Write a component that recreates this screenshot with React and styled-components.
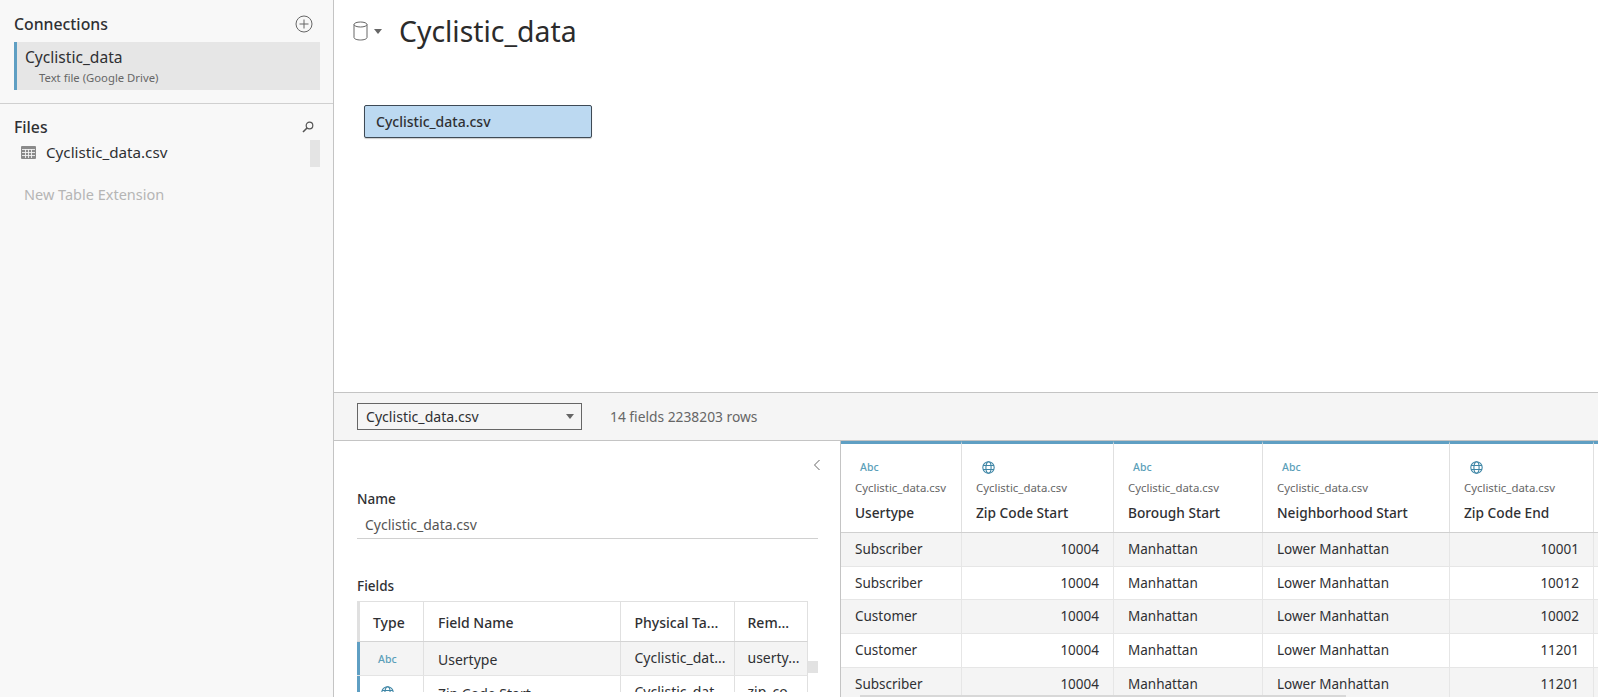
import styled, { createGlobalStyle } from "styled-components";

const FONT = `"Noto Sans", "Open Sans", "Liberation Sans", sans-serif`;
const BLUE = "#5f9fc3";

const GlobalStyle = createGlobalStyle`
  html, body { margin: 0; padding: 0; background: #fff; }
  * { box-sizing: border-box; }
  body { font-family: ${FONT}; color: #2f3033; }
`;

const Page = styled.div`
  display: flex;
  width: 1598px;
  height: 697px;
  overflow: hidden;
`;

/* ---------- left sidebar ---------- */
const Sidebar = styled.aside`
  width: 334px;
  flex: none;
  background: #f8f8f8;
  border-right: 1px solid #c4c4c4;
`;

const SideSection = styled.section`
  padding: ${(p) => p.$pad};
  border-bottom: ${(p) => (p.$divider ? "1px solid #d0d0d0" : "none")};
`;

const SideHead = styled.div`
  display: flex;
  justify-content: space-between;
  align-items: center;
  height: 24px;
  font-size: 15.8px;
  font-weight: 500;
  padding-right: ${(p) => p.$pr};
`;

const ConnectionRow = styled.div`
  height: 48px;
  margin-top: 6px;
  background: #e6e6e6;
  border-left: 3px solid ${BLUE};
  padding: 4px 0 0 8px;
`;

const ConnectionName = styled.div`
  font-size: 15.6px;
  line-height: 22px;
`;

const ConnectionSub = styled.div`
  font-size: 11.3px;
  line-height: 16px;
  margin: 2px 0 0 14px;
  color: #666;
`;

const FileList = styled.div`
  position: relative;
  margin-top: 1px;
`;

const FileRow = styled.div`
  display: flex;
  align-items: center;
  gap: 10px;
  height: 24px;
  padding-left: 7px;
  font-size: 15.2px;
`;

const FileThumb = styled.div`
  position: absolute;
  right: 0;
  top: 0;
  width: 10px;
  height: 27px;
  background: #e4e4e4;
`;

const NewTable = styled.div`
  margin: 20px 0 0 10px;
  font-size: 14.5px;
  color: #b5b5b5;
`;

/* ---------- main ---------- */
const Main = styled.main`
  flex: 1;
  min-width: 0;
  display: flex;
  flex-direction: column;
`;

const Canvas = styled.div`
  height: 392px;
  flex: none;
  padding: 10px 0 0 19px;
`;

const TitleRow = styled.div`
  display: flex;
  align-items: center;
  height: 42px;
`;

const Title = styled.h1`
  margin: 0 0 0 17px;
  font-size: 28.4px;
  font-weight: 400;
  color: #2b2b2b;
`;

const Caret = styled.span`
  display: inline-block;
  width: 0;
  height: 0;
  margin-left: 6px;
  border-left: 4.5px solid transparent;
  border-right: 4.5px solid transparent;
  border-top: 5px solid #666;
`;

const TableChip = styled.div`
  display: flex;
  align-items: center;
  width: 228px;
  height: 33px;
  margin: 53px 0 0 11px;
  padding-left: 11px;
  background: #bcd9f1;
  border: 1px solid #3e4a55;
  border-radius: 2px;
  box-shadow: 0 1px 1px rgba(0, 0, 0, 0.2);
  font-size: 14px;
  font-weight: 500;
`;

const Toolbar = styled.div`
  display: flex;
  align-items: center;
  height: 49px;
  flex: none;
  padding: 0 0 0 23px;
  background: #f5f5f5;
  border-top: 1px solid #c4c4c4;
  border-bottom: 1px solid #c4c4c4;
`;

const SelectBox = styled.div`
  display: flex;
  align-items: center;
  justify-content: space-between;
  width: 225px;
  height: 27px;
  padding: 0 7px 0 8px;
  border: 1px solid #666;
  font-size: 14.1px;
`;

const ToolbarInfo = styled.span`
  margin-left: 28px;
  font-size: 13.8px;
  color: #666;
`;

const Lower = styled.div`
  flex: 1;
  min-height: 0;
  display: flex;
`;

const MetaPanel = styled.div`
  width: 507px;
  flex: none;
  position: relative;
  padding: 0 22px 0 23px;
  border-right: 1px solid #c4c4c4;
  overflow: hidden;
`;

const Collapse = styled.div`
  display: flex;
  justify-content: flex-end;
  height: 48px;
  padding: 18px 0 0 0;
  margin-right: -3px;
`;

const MetaLabel = styled.div`
  font-size: 13.5px;
  font-weight: 500;
  line-height: 20px;
`;

const NameValue = styled.div`
  height: 30px;
  padding: 6px 0 0 8px;
  margin-bottom: 37px;
  border-bottom: 1px solid #d0d0d0;
  font-size: 14px;
  color: #555;
`;

const FieldsClip = styled.div`
  position: relative;
  height: 91px;
  margin-top: 5px;
  overflow: hidden;
`;

const FieldsRow = styled.div`
  display: grid;
  grid-template-columns: 67px 196.5px 114px 73.5px;
  width: 451px;
  height: ${(p) => p.$h};
  font-weight: ${(p) => (p.$head ? 500 : 400)};
  background: ${(p) => (p.$shade ? "#f4f4f4" : "#fff")};
  border-top: ${(p) => (p.$head ? "1px solid #e0e0e0" : "none")};
  border-bottom: 1px solid ${(p) => (p.$head ? "#d4d4d4" : "#e4e4e4")};
  border-right: 1px solid #e0e0e0;
  font-size: 14px;
`;

const FieldCell = styled.div`
  display: flex;
  align-items: center;
  padding: ${(p) => p.$pad || "2px 0 0 14px"};
  border-right: ${(p) => (p.$last ? "none" : "1px solid #e0e0e0")};
  border-left: ${(p) => (p.$bar ? `3px solid ${p.$bar}` : "none")};
  white-space: nowrap;
  overflow: hidden;
`;

const FieldsThumb = styled.div`
  position: absolute;
  left: 451px;
  top: 60px;
  width: 10px;
  height: 12px;
  background: #e2e2e2;
`;

const Abc = styled.span`
  font-size: 10.5px;
  font-weight: 500;
  color: #5b9fb9;
`;

/* ---------- data grid ---------- */
const DataGrid = styled.div`
  flex: 1;
  min-width: 0;
  position: relative;
  overflow: hidden;
`;

const DataRow = styled.div`
  display: grid;
  grid-template-columns: 121px 152px 149px 187px 144px 1fr;
  height: ${(p) => p.$h};
  background: ${(p) => (p.$shade ? "#f4f4f4" : "#fff")};
  border-bottom: 1px solid ${(p) => (p.$head ? "#d0d0d0" : "#e6e6e6")};
`;

const HeadCell = styled.div`
  padding: 13px 0 0 14px;
  border-top: 3px solid ${BLUE};
  border-right: 1px solid #e0e0e0;
`;

const HeadIcon = styled.div`
  display: flex;
  align-items: center;
  height: 20px;
  padding-left: ${(p) => p.$pl};
`;

const HeadSource = styled.div`
  font-size: 11.4px;
  line-height: 16px;
  margin-top: 3px;
  color: #666;
`;

const HeadName = styled.div`
  font-size: 13.7px;
  font-weight: 500;
  line-height: 20px;
  margin-top: 7px;
`;

const DataCell = styled.div`
  display: flex;
  align-items: center;
  justify-content: ${(p) => (p.$num ? "flex-end" : "flex-start")};
  padding: ${(p) => (p.$num ? "0 14px 1px 0" : "0 0 1px 14px")};
  border-right: 1px solid #e6e6e6;
  font-size: 13.5px;
  white-space: nowrap;
`;

const GridScroll = styled.div`
  position: absolute;
  left: 19px;
  bottom: 0;
  width: 486px;
  height: 2px;
  background: #d8d8d8;
`;

/* ---------- drawings ---------- */
const PlusCircle = () => (
  <svg width="18" height="18" viewBox="0 0 18 18" fill="none" stroke="#666" strokeWidth="1">
    <circle cx="9" cy="9" r="8" />
    <path d="M9 4.5v9M4.5 9h9" />
  </svg>
);

const Search = () => (
  <svg width="12" height="12" viewBox="0 0 12 12" fill="none" stroke="#555" strokeWidth="1.2">
    <circle cx="7.5" cy="4.5" r="3.3" />
    <path d="M5 7L1 11" strokeWidth="1.6" />
  </svg>
);

const TableIcon = () => (
  <svg width="15" height="13" viewBox="0 0 15 13">
    <rect x="0" y="0" width="15" height="13" rx="1" fill="#8a8a8a" />
    <path d="M1 3.5h13M1 6.5h13M1 9.5h13M4.5 3v9M7.5 3v9M10.5 3v9" stroke="#f2f2f2" strokeWidth="0.9" fill="none" />
  </svg>
);

const Cylinder = () => (
  <svg width="15" height="20" viewBox="0 0 15 20" fill="none" stroke="#666" strokeWidth="1">
    <ellipse cx="7.5" cy="3.5" rx="6.5" ry="2.5" />
    <path d="M1 3.5v13c0 1.4 2.9 2.5 6.5 2.5s6.5-1.1 6.5-2.5v-13" />
  </svg>
);

const Globe = ({ size = 13 }) => (
  <svg width={size} height={size} viewBox="0 0 13 13" fill="none" stroke="#3f86a6" strokeWidth="1.1">
    <circle cx="6.5" cy="6.5" r="5.7" />
    <ellipse cx="6.5" cy="6.5" rx="2.6" ry="5.7" />
    <path d="M1 4.5h11M1 8.5h11" />
  </svg>
);

const Chevron = () => (
  <svg width="8" height="12" viewBox="0 0 8 12" fill="none" stroke="#666" strokeWidth="1">
    <path d="M6.5 1L1.5 6l5 5" />
  </svg>
);

const columns = [
  { name: "Usertype", type: "abc" },
  { name: "Zip Code Start", type: "geo" },
  { name: "Borough Start", type: "abc" },
  { name: "Neighborhood Start", type: "abc" },
  { name: "Zip Code End", type: "geo" },
];

const rows = [
  ["Subscriber", "10004", "Manhattan", "Lower Manhattan", "10001"],
  ["Subscriber", "10004", "Manhattan", "Lower Manhattan", "10012"],
  ["Customer", "10004", "Manhattan", "Lower Manhattan", "10002"],
  ["Customer", "10004", "Manhattan", "Lower Manhattan", "11201"],
  ["Subscriber", "10004", "Manhattan", "Lower Manhattan", "11201"],
];

export default function App() {
  return (
    <Page>
      <GlobalStyle />
      <Sidebar>
        <SideSection $pad="12px 13px 13px 14px" $divider>
          <SideHead $pr="7px">
            Connections
            <PlusCircle />
          </SideHead>
          <ConnectionRow>
            <ConnectionName>Cyclistic_data</ConnectionName>
            <ConnectionSub>Text file (Google Drive)</ConnectionSub>
          </ConnectionRow>
        </SideSection>
        <SideSection $pad="11px 13px 11px 14px">
          <SideHead $pr="6px">
            Files
            <Search />
          </SideHead>
          <FileList>
            <FileRow>
              <TableIcon />
              Cyclistic_data.csv
            </FileRow>
            <FileThumb />
          </FileList>
          <NewTable>New Table Extension</NewTable>
        </SideSection>
      </Sidebar>

      <Main>
        <Canvas>
          <TitleRow>
            <Cylinder />
            <Caret />
            <Title>Cyclistic_data</Title>
          </TitleRow>
          <TableChip>Cyclistic_data.csv</TableChip>
        </Canvas>

        <Toolbar>
          <SelectBox>
            Cyclistic_data.csv
            <Caret />
          </SelectBox>
          <ToolbarInfo>14 fields 2238203 rows</ToolbarInfo>
        </Toolbar>

        <Lower>
          <MetaPanel>
            <Collapse>
              <Chevron />
            </Collapse>
            <MetaLabel>Name</MetaLabel>
            <NameValue>Cyclistic_data.csv</NameValue>
            <MetaLabel>Fields</MetaLabel>
            <FieldsClip>
              <FieldsRow $head $h="41px">
                <FieldCell $bar="#e0e0e0" $pad="2px 0 0 13px">Type</FieldCell>
                <FieldCell>Field Name</FieldCell>
                <FieldCell>Physical Ta...</FieldCell>
                <FieldCell $last $pad="2px 0 0 13px">Rem...</FieldCell>
              </FieldsRow>
              <FieldsRow $shade $h="34px">
                <FieldCell $bar={BLUE} $pad="0 0 0 18px"><Abc>Abc</Abc></FieldCell>
                <FieldCell>Usertype</FieldCell>
                <FieldCell $pad="0 0 3px 14px">Cyclistic_dat...</FieldCell>
                <FieldCell $last $pad="0 0 3px 13px">userty...</FieldCell>
              </FieldsRow>
              <FieldsRow $h="34px">
                <FieldCell $bar={BLUE} $pad="0 0 0 21px"><Globe /></FieldCell>
                <FieldCell>Zip Code Start</FieldCell>
                <FieldCell $pad="0 0 3px 14px">Cyclistic_dat...</FieldCell>
                <FieldCell $last $pad="0 0 3px 13px">zip_co...</FieldCell>
              </FieldsRow>
              <FieldsThumb />
            </FieldsClip>
          </MetaPanel>

          <DataGrid>
            <DataRow $head $h="92px">
              {columns.map((c) => (
                <HeadCell key={c.name}>
                  <HeadIcon $pl={c.type === "abc" ? "5px" : "6px"}>
                    {c.type === "abc" ? <Abc>Abc</Abc> : <Globe />}
                  </HeadIcon>
                  <HeadSource>Cyclistic_data.csv</HeadSource>
                  <HeadName>{c.name}</HeadName>
                </HeadCell>
              ))}
              <HeadCell />
            </DataRow>
            {rows.map((r, i) => (
              <DataRow key={i} $shade={i % 2 === 0} $h="33.7px">
                {r.map((v, j) => (
                  <DataCell key={j} $num={j === 1 || j === 4}>{v}</DataCell>
                ))}
                <DataCell />
              </DataRow>
            ))}
            <GridScroll />
          </DataGrid>
        </Lower>
      </Main>
    </Page>
  );
}
